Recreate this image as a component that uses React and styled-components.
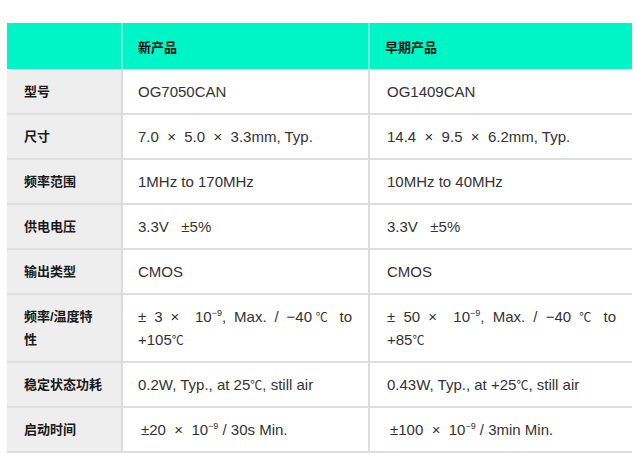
import React from "react";
import styled, { createGlobalStyle } from "styled-components";

const Global = createGlobalStyle`
  html, body { margin: 0; padding: 0; background: #ffffff; }
  body { font-family: "Liberation Sans", "Noto Sans CJK SC", sans-serif; }
`;

const Page = styled.div`
  padding: 23px 5px 0 6px;
`;

const Table = styled.table`
  width: 625px;
  border-collapse: collapse;
  table-layout: fixed;
`;

const HeadCell = styled.th`
  height: 46px;
  padding: 0 ${(p) => (p.$first ? 17 : 15)}px;
  background: #00f5c6;
  text-align: left;
  font-family: "Liberation Sans", "Noto Sans CJK SC", sans-serif;
  font-size: 13px;
  font-weight: 700;
  color: #111;
  border-left: 2px solid ${(p) => (p.$first ? "transparent" : "#6ff5d9")};
  box-sizing: border-box;
  vertical-align: middle;
`;

const Row = styled.tr`
  height: ${(p) => (p.$tall ? 68 : 45)}px;
  border-bottom: 2px solid #dedede;
`;

const Label = styled.td`
  background: #eeeeee;
  padding: 0 17px;
  font-size: 13px;
  font-weight: 700;
  line-height: 23px;
  color: #1a1a1a;
  border-right: 2px solid #dcdcdc;
  vertical-align: middle;
`;

const Value = styled.td`
  padding: 0 16px 0 ${(p) => (p.$divide ? 17 : 15)}px;
  font-size: 15px;
  line-height: 23px;
  color: #333333;
  text-align: ${(p) => (p.$justify ? "justify" : "left")};
  border-left: ${(p) => (p.$divide ? "2px solid #dcdcdc" : "none")};
  vertical-align: middle;
`;

const Sup = styled.sup`
  font-size: 9px;
  line-height: 1;
  vertical-align: 6px;
`;

const Deg = styled.span`
  font-family: "Noto Sans CJK SC", sans-serif;
  font-size: 12px;
`;

const S = "\u00a0";
const T = "\u2009";

const rows = [
  { label: "型号", a: "OG7050CAN", b: "OG1409CAN" },
  {
    label: "尺寸",
    a: `7.0 ${S}×${S} 5.0 ${S}×${S} 3.3mm, Typ.`,
    b: `14.4 ${S}×${S} 9.5 ${S}×${S} 6.2mm, Typ.`,
  },
  { label: "频率范围", a: "1MHz to 170MHz", b: "10MHz to 40MHz" },
  { label: "供电电压", a: `3.3V ${S}${S}±5%`, b: `3.3V ${S}${S}±5%` },
  { label: "输出类型", a: "CMOS", b: "CMOS" },
  {
    label: "频率/温度特性",
    tall: true,
    justify: true,
    a: (
      <>
        ± 3 × {S}10<Sup>−9</Sup>, Max. / −40<Deg>℃</Deg> to +105<Deg>℃</Deg>
      </>
    ),
    b: (
      <>
        ± 50 × {S}10<Sup>−9</Sup>, Max. / −40 <Deg>℃</Deg> to +85<Deg>℃</Deg>
      </>
    ),
  },
  {
    label: "稳定状态功耗",
    a: (
      <>
        0.2W, Typ., at 25<Deg>℃</Deg>, still air
      </>
    ),
    b: (
      <>
        0.43W, Typ., at +25<Deg>℃</Deg>, still air
      </>
    ),
  },
  {
    label: "启动时间",
    a: (
      <>
        {T}±20 {S}× {S}10<Sup>−9</Sup> / 30s Min.
      </>
    ),
    b: (
      <>
        {T}±100 {S}× {S}10<Sup>−9</Sup> / 3min Min.
      </>
    ),
  },
];

export default function App() {
  return (
    <Page>
      <Global />
      <Table>
        <colgroup>
          <col style={{ width: 115 }} />
          <col style={{ width: 247 }} />
          <col style={{ width: 263 }} />
        </colgroup>
        <thead>
          <tr>
            <HeadCell $first></HeadCell>
            <HeadCell>新产品</HeadCell>
            <HeadCell>早期产品</HeadCell>
          </tr>
        </thead>
        <tbody>
          {rows.map((r) => (
            <Row key={r.label} $tall={r.tall}>
              <Label>{r.label}</Label>
              <Value $justify={r.justify}>{r.a}</Value>
              <Value $justify={r.justify} $divide>
                {r.b}
              </Value>
            </Row>
          ))}
        </tbody>
      </Table>
    </Page>
  );
}
